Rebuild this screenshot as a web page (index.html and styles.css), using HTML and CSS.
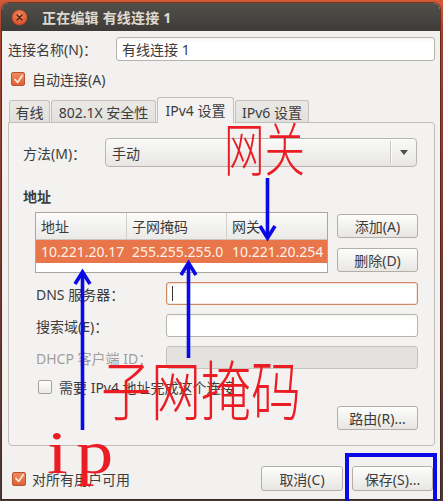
FILE: index.html
```html
<!DOCTYPE html>
<html lang="zh-CN">
<head>
<meta charset="utf-8">
<title>正在编辑 有线连接 1</title>
<link rel="stylesheet" href="styles.css">
</head>
<body>
<div class="window">
  <div class="titlebar">
    <span class="close"><svg width="15" height="15" viewBox="0 0 15 15"><path d="M5 5 L10 10 M10 5 L5 10" stroke="#4a2416" stroke-width="1.4" stroke-linecap="round"/></svg></span>
    <span class="title">正在编辑 有线连接 1</span>
  </div>
  <div class="content">
    <div class="name-row">
      <span class="name-label">连接名称(N)：</span>
      <div class="entry">有线连接 1</div>
    </div>
    <div class="check-row top-check">
      <span class="cb on"><svg width="11" height="11" viewBox="0 0 11 11"><path d="M2 5.5 L4.6 8.4 L9.2 1.8" fill="none" stroke="#fde6d6" stroke-width="1.8" stroke-linecap="round" stroke-linejoin="round"/></svg></span>
      <span class="cb-text">自动连接(A)</span>
    </div>
    <div class="tabs">
      <div class="tab t1">有线</div>
      <div class="tab t2">802.1X 安全性</div>
      <div class="tab t3 active">IPv4 设置</div>
      <div class="tab t4">IPv6 设置</div>
    </div>
    <div class="panel">
      <div class="method-row">
        <span class="method-label">方法(M)：</span>
        <div class="combo">
          <span class="combo-text">手动</span>
          <span class="combo-sep"></span>
          <span class="combo-arrow"></span>
        </div>
      </div>
      <div class="section-title">地址</div>
      <div class="addr">
        <div class="table">
          <div class="thead">
            <div class="th">地址</div>
            <div class="th">子网掩码</div>
            <div class="th last">网关</div>
          </div>
          <div class="tr selected">
            <div class="td">10.221.20.17</div>
            <div class="td">255.255.255.0</div>
            <div class="td">10.221.20.254</div>
          </div>
        </div>
        <div class="side-btns">
          <div class="btn">添加(A)</div>
          <div class="btn">删除(D)</div>
        </div>
      </div>
      <div class="form">
        <span class="flabel">DNS 服务器：</span>
        <div class="entry focus"><span class="caret"></span></div>
        <span class="flabel">搜索域(E)：</span>
        <div class="entry"></div>
        <span class="flabel disabled">DHCP 客户端 ID：</span>
        <div class="entry dis"></div>
      </div>
      <div class="check-row need-check">
        <span class="cb"></span>
        <span class="cb-text">需要 IPv4 地址完成这个连接</span>
      </div>
      <div class="route-row">
        <div class="btn route">路由(R)...</div>
      </div>
    </div>
    <div class="bottom">
      <span class="cb on"><svg width="11" height="11" viewBox="0 0 11 11"><path d="M2 5.5 L4.6 8.4 L9.2 1.8" fill="none" stroke="#fde6d6" stroke-width="1.8" stroke-linecap="round" stroke-linejoin="round"/></svg></span>
      <span class="cb-text">对所有用户可用</span>
      <span class="spacer"></span>
      <div class="btn cancel">取消(C)</div>
      <div class="btn save">保存(S)...</div>
    </div>
  </div>
</div>

<span class="mark-red gw">网关</span>
<span class="mark-red mask">子网掩码</span>
<span class="mark-ip">ip</span>
<svg class="overlay" width="443" height="501" viewBox="0 0 443 501">
  <g stroke="#0a0ae6" stroke-width="3.6" fill="none" stroke-linecap="butt" stroke-linejoin="miter">
    <line x1="267.5" y1="178" x2="267.5" y2="236"/>
    <polyline points="260,226 267.5,238 275,226"/>
    <line x1="82.5" y1="430" x2="82.5" y2="274"/>
    <polyline points="75,284 82.5,272 90,284"/>
    <line x1="188.5" y1="358" x2="188.5" y2="265"/>
    <polyline points="181,275 188.5,263 196,275"/>
  </g>
  <rect x="347" y="455" width="88" height="60" fill="none" stroke="#0a0ae6" stroke-width="4"/>
</svg>
</body>
</html>
```
FILE: styles.css
```css
html, body {
  margin: 0;
  padding: 0;
}
body {
  width: 443px;
  height: 501px;
  overflow: hidden;
  position: relative;
  background: linear-gradient(180deg, #d25a36 0px, #a44330 30px, #7c3a30 250px, #4a3b37 501px);
  font-family: "Noto Sans", "Noto Sans CJK SC", sans-serif;
  font-size: 14px;
  color: #3c3c3c;
}
.window {
  margin: 3px 3px 0 2px;
  height: 496px;
  border-radius: 7px 7px 0 0;
  background: #f2f1f0;
  display: flex;
  flex-direction: column;
  overflow: hidden;
  box-shadow: 0 0 0 1px rgba(50, 25, 20, 0.55);
}
.titlebar {
  height: 28px;
  flex: none;
  background: linear-gradient(180deg, #504f4a, #3d3c38);
  display: flex;
  align-items: center;
  padding-left: 10px;
}
.close {
  width: 15px;
  height: 15px;
  border-radius: 50%;
  background: radial-gradient(circle at 50% 35%, #f58c62, #e0592f 65%, #c24a27);
  box-shadow: 0 0 0 0.5px #8c3a20;
  display: flex;
}
.title {
  margin-left: 15px;
  font-weight: bold;
  color: #dfdbd2;
  font-size: 14px;
  letter-spacing: 0.2px;
}
.content {
  flex: 1;
  padding: 6px 5px 8px 6px;
  display: flex;
  flex-direction: column;
}
.name-row {
  display: flex;
  align-items: center;
  height: 24px;
}
.name-label {
  width: 108px;
  flex: none;
}
.entry {
  box-sizing: border-box;
  height: 24px;
  border: 1px solid #b7b3ac;
  border-radius: 3px;
  background: linear-gradient(180deg, #f7f7f6 0px, #ffffff 5px);
  display: flex;
  align-items: center;
  padding-left: 5px;
}
.name-row .entry {
  flex: 1;
}
.check-row {
  display: flex;
  align-items: center;
  height: 20px;
  margin-top: 8px;
}
.top-check {
  padding-left: 3px;
}
.cb {
  box-sizing: border-box;
  width: 14px;
  height: 14px;
  flex: none;
  border-radius: 2px;
  border: 1px solid #a6a29b;
  background: linear-gradient(180deg, #ffffff, #ebeae7);
  display: flex;
  align-items: center;
  justify-content: center;
}
.cb.on {
  border-color: #b7542f;
  background: linear-gradient(180deg, #f08a5c, #dc6236);
}
.cb-text {
  margin-left: 7px;
}
.tabs {
  margin-top: 8px;
  height: 26px;
  display: flex;
  align-items: flex-end;
  padding-left: 1px;
  gap: 1px;
  position: relative;
  z-index: 2;
  margin-bottom: -1px;
}
.tab {
  box-sizing: border-box;
  height: 22px;
  margin-bottom: 1px;
  border: 1px solid #c5c1ba;
  border-bottom: none;
  border-radius: 3px 3px 0 0;
  background: linear-gradient(180deg, #ebe9e6, #e2e0dc);
  display: flex;
  align-items: center;
  justify-content: center;
  color: #3c3c3c;
}
.t1 { width: 41px; }
.t2 { width: 105px; }
.t3 { width: 77px; }
.t4 { width: 74px; }
.tab.active {
  height: 26px;
  margin-bottom: 0;
  background: #f3f2f0;
  padding-bottom: 2px;
}
.panel {
  border: 1px solid #c3bfb8;
  border-radius: 0 4px 4px 4px;
  background: #f3f2f0;
  padding: 15px 16px 15px 14px;
  display: flex;
  flex-direction: column;
}
.method-row {
  display: flex;
  align-items: center;
  height: 29px;
}
.method-label {
  width: 82px;
  flex: none;
}
.combo {
  flex: 1;
  margin-right: 1px;
  box-sizing: border-box;
  height: 29px;
  border: 1px solid #b9b5ae;
  border-radius: 4px;
  background: linear-gradient(180deg, #fafaf9, #e7e6e3);
  box-shadow: inset 0 1px 0 #ffffff;
  display: flex;
  align-items: center;
  padding-left: 6px;
}
.combo-text {
  flex: 1;
}
.combo-sep {
  width: 1px;
  height: 23px;
  background: #cbc7c0;
  box-shadow: 1px 0 0 #fbfbfa;
}
.combo-arrow {
  width: 0;
  height: 0;
  border-left: 4px solid transparent;
  border-right: 4px solid transparent;
  border-top: 5px solid #4e4d4a;
  margin: 0 8px 0 9px;
}
.section-title {
  margin-top: 20px;
  height: 20px;
  line-height: 20px;
  font-weight: bold;
}
.addr {
  margin-top: 5px;
  display: flex;
  padding-left: 12px;
}
.table {
  box-sizing: border-box;
  width: 293px;
  height: 61px;
  border: 1px solid #aaa69f;
  background: #ffffff;
}
.thead, .tr {
  display: grid;
  grid-template-columns: 91px 100px 1fr;
}
.thead {
  height: 27px;
  box-sizing: border-box;
  border-bottom: 1px solid #c9c6c0;
  background: linear-gradient(180deg, #fbfbfa, #ebeae7);
}
.th {
  border-right: 1px solid #d3d0ca;
  padding-left: 5px;
  display: flex;
  align-items: center;
}
.th.last {
  border-right: none;
}
.tr {
  height: 23px;
}
.tr.selected {
  background: #e8764a;
  color: #fdf1e9;
}
.td {
  padding-left: 5px;
  display: flex;
  align-items: center;
}
.side-btns {
  margin-left: 9px;
  width: 81px;
  display: flex;
  flex-direction: column;
  gap: 10px;
  padding-top: 2px;
}
.btn {
  box-sizing: border-box;
  height: 24px;
  border: 1px solid #b3afa8;
  border-radius: 3px;
  background: linear-gradient(180deg, #fdfdfc, #e7e6e3);
  box-shadow: inset 0 1px 0 #ffffff;
  display: flex;
  align-items: center;
  justify-content: center;
  color: #3c3c3c;
}
.form {
  margin-top: 9px;
  padding-left: 13px;
  display: grid;
  grid-template-columns: 130px 252px;
  grid-auto-rows: 23px;
  row-gap: 9px;
  align-items: center;
}
.form .entry {
  height: 23px;
}
.flabel.disabled {
  color: #a09e9a;
}
.entry.focus {
  border-color: #cd8a60;
  box-shadow: inset 0 0 0 0.5px rgba(205, 138, 96, 0.4);
}
.caret {
  width: 1px;
  height: 15px;
  background: #333333;
}
.entry.dis {
  background: #e4e2df;
  border-color: #c7c3bc;
}
.need-check {
  padding-left: 15px;
  margin-top: 8px;
}
.need-check .cb-text {
  margin-left: 7px;
}
.route-row {
  margin-top: 9px;
  display: flex;
  justify-content: flex-end;
}
.btn.route {
  width: 81px;
}
.bottom {
  margin-top: 20px;
  height: 25px;
  display: flex;
  align-items: center;
  padding-left: 4px;
  padding-right: 2px;
}
.bottom .cb-text {
  margin-left: 6px;
}
.spacer {
  flex: 1;
}
.btn.cancel {
  width: 82px;
  height: 25px;
}
.btn.save {
  width: 81px;
  height: 25px;
  margin-left: 9px;
}
.mark-red {
  position: absolute;
  color: #ec1c24;
  font-family: "Noto Sans CJK SC", sans-serif;
  font-weight: 300;
  line-height: 1;
  white-space: nowrap;
  transform-origin: 0 0;
}
.gw {
  left: 224px;
  top: 117px;
  font-size: 44px;
  transform: scale(0.92, 1.32);
}
.mask {
  left: 101px;
  top: 354px;
  font-size: 50px;
  transform: scale(1, 1.3);
}
.mark-ip {
  position: absolute;
  left: 47px;
  top: 421px;
  font-family: "Liberation Serif", serif;
  font-size: 62px;
  line-height: 1;
  letter-spacing: 7px;
  color: #ec1c24;
  transform-origin: 0 0;
  transform: scaleX(1.2);
}
.overlay {
  position: absolute;
  left: 0;
  top: 0;
  pointer-events: none;
}
```
